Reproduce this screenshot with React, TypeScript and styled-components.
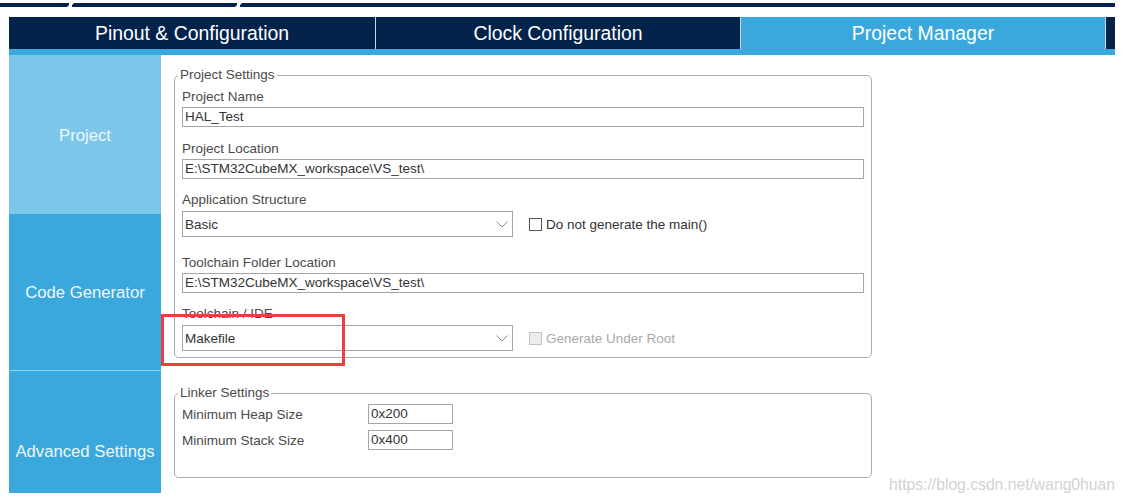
import styled, { createGlobalStyle } from 'styled-components';

const GlobalStyle = createGlobalStyle`
  html, body {
    margin: 0;
    padding: 0;
    background: #fff;
  }
  body {
    font-family: "Liberation Sans", Arial, sans-serif;
  }
  * {
    box-sizing: border-box;
  }
`;

const NAVY = '#03234b';
const BLUE = '#3aa8dc';
const LIGHT_BLUE = '#7cc6ea';

function Chevron() {
  return (
    <svg width='12' height='7' viewBox='0 0 12 7'>
      <polyline points='0.5,0.5 6,6 11.5,0.5' fill='none' stroke='#8a8a8a' strokeWidth='1' />
    </svg>
  );
}

export default function App() {
  return (
    <Page>
      <GlobalStyle />
      <TopStrip>
        <StripSegment $width={69} />
        <Slash />
        <StripSegment $width={165} />
        <Slash />
        <StripSegment />
      </TopStrip>

      <Frame>
        <TabBar>
          <Tab $width={367}>Pinout &amp; Configuration</Tab>
          <Tab $width={365}>Clock Configuration</Tab>
          <Tab $width={365} $active>
            Project Manager
          </Tab>
          <TabTail />
        </TabBar>
        <TabUnderline />

        <Body>
          <Sidebar>
            <NavItem $height={159} $active>
              Project
            </NavItem>
            <NavItem $height={156}>Code Generator</NavItem>
            <NavItem $height={123} $bottom $divider>
              Advanced Settings
            </NavItem>
          </Sidebar>

          <Content>
            <Group>
              <Legend>Project Settings</Legend>
              <Label>Project Name</Label>
              <TextField>HAL_Test</TextField>

              <Label $gap={14}>Project Location</Label>
              <TextField>E:\STM32CubeMX_workspace\VS_test\</TextField>

              <Label $gap={13}>Application Structure</Label>
              <SelectRow>
                <Select>
                  <span>Basic</span>
                  <Chevron />
                </Select>
                <Check>
                  <CheckBox />
                  Do not generate the main()
                </Check>
              </SelectRow>

              <Label $gap={18}>Toolchain Folder Location</Label>
              <TextField>E:\STM32CubeMX_workspace\VS_test\</TextField>

              <Label $gap={13}>Toolchain / IDE</Label>
              <SelectRow>
                <Select>
                  <span>Makefile</span>
                  <Chevron />
                </Select>
                <Check $disabled>
                  <CheckBox $disabled />
                  Generate Under Root
                </Check>
              </SelectRow>
            </Group>

            <Group $compact>
              <Legend>Linker Settings</Legend>
              <LinkerRow>
                <RowLabel>Minimum Heap Size</RowLabel>
                <SmallField>0x200</SmallField>
              </LinkerRow>
              <LinkerRow>
                <RowLabel>Minimum Stack Size</RowLabel>
                <SmallField>0x400</SmallField>
              </LinkerRow>
            </Group>

            <Highlight />
          </Content>
        </Body>
      </Frame>

      <Watermark>https://blog.csdn.net/wang0huan</Watermark>
    </Page>
  );
}

const Page = styled.div`
  position: relative;
  width: 1124px;
  height: 503px;
  overflow: hidden;
  background: #fff;
`;

const TopStrip = styled.div`
  display: flex;
  width: 1115px;
  height: 4px;
  margin-top: 3px;
`;

const StripSegment = styled.div<{ $width?: number }>`
  background: ${NAVY};
  ${({ $width }) => ($width ? `width: ${$width}px;` : 'flex: 1;')}
`;

const Slash = styled.div`
  width: 3px;
  background: #fff;
  transform: skewX(-45deg);
`;

const Frame = styled.div`
  width: 1106px;
  margin: 10px 0 0 9px;
`;

const TabBar = styled.div`
  display: flex;
  height: 32px;
`;

const Tab = styled.div<{ $width: number; $active?: boolean }>`
  width: ${({ $width }) => $width}px;
  display: flex;
  align-items: center;
  justify-content: center;
  background: ${({ $active }) => ($active ? BLUE : NAVY)};
  border-right: 1px solid #c9d6e3;
  color: #fff;
  font-size: 19.4px;
`;

const TabTail = styled.div`
  flex: 1;
  background: ${NAVY};
`;

const TabUnderline = styled.div`
  height: 6px;
  background: ${BLUE};
`;

const Body = styled.div`
  display: flex;
  align-items: flex-start;
`;

const Sidebar = styled.div`
  width: 152px;
  display: flex;
  flex-direction: column;
`;

const NavItem = styled.div<{ $height: number; $active?: boolean; $bottom?: boolean; $divider?: boolean }>`
  height: ${({ $height }) => $height}px;
  display: flex;
  align-items: center;
  justify-content: ${({ $bottom }) => ($bottom ? 'flex-end' : 'center')};
  flex-direction: column;
  padding-bottom: ${({ $bottom }) => ($bottom ? '31px' : '0')};
  padding-top: ${({ $bottom }) => ($bottom ? '0' : '2px')};
  background: ${({ $active }) => ($active ? LIGHT_BLUE : BLUE)};
  border-top: ${({ $divider }) => ($divider ? '1px solid #8fd0ef' : 'none')};
  color: #eef7fc;
  font-size: 16.7px;
`;

const Content = styled.div`
  position: relative;
  flex: 1;
  padding: 12px 0 0 13px;
`;

const Group = styled.fieldset<{ $compact?: boolean }>`
  width: 698px;
  margin: ${({ $compact }) => ($compact ? '27px 0 0 0' : '0')};
  padding: ${({ $compact }) => ($compact ? '3px 7px 27px 7px' : '6px 7px 6px 7px')};
  border: 1px solid #a8adb2;
  border-radius: 5px;
`;

const Legend = styled.legend`
  margin-left: -4px;
  padding: 0 2px;
  font-size: 13.5px;
  line-height: 16px;
  color: #4a4a4a;
`;

const Label = styled.div<{ $gap?: number }>`
  margin-top: ${({ $gap }) => $gap ?? 0}px;
  margin-bottom: 2px;
  font-size: 13.5px;
  line-height: 16px;
  color: #4a4a4a;
`;

const TextField = styled.div`
  height: 20px;
  width: 682px;
  padding-left: 2px;
  border: 1px solid #a3a6a9;
  font-size: 13.5px;
  line-height: 18px;
  color: #333;
  white-space: nowrap;
`;

const SelectRow = styled.div`
  display: flex;
  align-items: center;
  padding-top: 1px;
`;

const Select = styled.div`
  width: 331px;
  height: 26px;
  display: flex;
  align-items: center;
  justify-content: space-between;
  padding: 0 4px 0 2px;
  border: 1px solid #a3a6a9;
  font-size: 13.5px;
  color: #333;
`;

const Check = styled.div<{ $disabled?: boolean }>`
  display: flex;
  align-items: center;
  margin-left: 16px;
  font-size: 13.5px;
  color: ${({ $disabled }) => ($disabled ? '#a9a9a9' : '#333')};
`;

const CheckBox = styled.span<{ $disabled?: boolean }>`
  width: 13px;
  height: 13px;
  margin-right: 4px;
  border: 1px solid ${({ $disabled }) => ($disabled ? '#c4c4c4' : '#555')};
  background: ${({ $disabled }) => ($disabled ? '#ececec' : '#fff')};
`;

const LinkerRow = styled.div`
  display: flex;
  align-items: center;
  height: 20px;
  & + & {
    margin-top: 6px;
  }
`;

const RowLabel = styled.div`
  width: 186px;
  font-size: 13.5px;
  color: #4a4a4a;
`;

const SmallField = styled.div`
  width: 85px;
  height: 20px;
  padding-left: 2px;
  border: 1px solid #a3a6a9;
  font-size: 13.5px;
  line-height: 18px;
  color: #333;
`;

const Highlight = styled.div`
  position: absolute;
  left: 0;
  top: 259px;
  width: 184px;
  height: 52px;
  border: 3px solid #ef3e3e;
  pointer-events: none;
`;

const Watermark = styled.div`
  position: absolute;
  right: 9px;
  bottom: 9px;
  font-size: 15.7px;
  line-height: 18px;
  color: #d2d2d2;
`;
